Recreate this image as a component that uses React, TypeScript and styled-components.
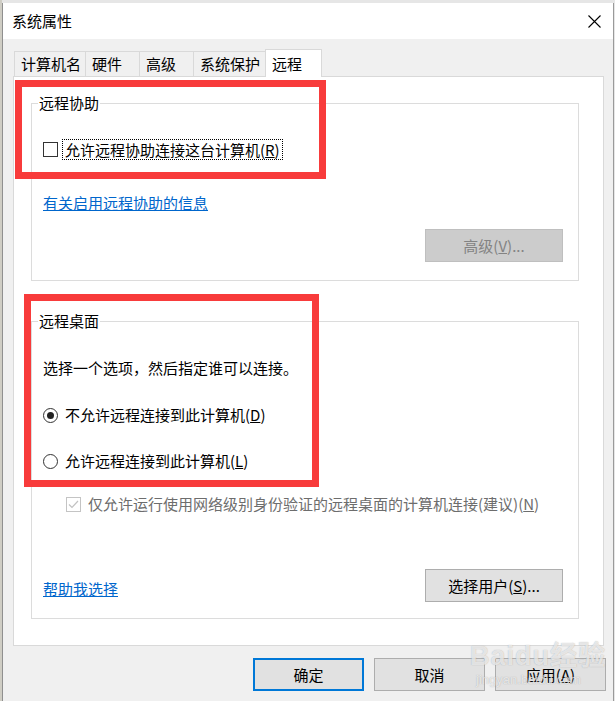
import React from "react";
import styled, { createGlobalStyle } from "styled-components";

const Global = createGlobalStyle`
  html, body { margin: 0; padding: 0; background: #e4e4e4; }
  body {
    font-family: "Noto Sans CJK SC", "Noto Sans", sans-serif;
    font-size: 15px;
    color: #000;
    overflow: hidden;
  }
  * { box-sizing: border-box; }
`;

const Stage = styled.div`
  position: relative;
  width: 615px;
  height: 701px;
  overflow: hidden;
  padding: 3px 1px 0 2px;
  background: linear-gradient(to right, #cfcdc4 0, #cfcdc4 2px, #e6e6e6 2px);
`;

const Window = styled.div`
  display: flex;
  flex-direction: column;
  height: 698px;
  background: #f0f0f0;
  border-left: 1px solid #8f8f8f;
  border-right: 1px solid #9a9a9a;
`;

const TitleBar = styled.div`
  display: flex;
  align-items: center;
  justify-content: space-between;
  height: 36px;
  padding-left: 9px;
  background: #fff;
  line-height: 20px;
`;

const CloseBox = styled.div`
  width: 38px;
  height: 36px;
  display: flex;
  align-items: center;
  justify-content: center;
`;

const Body = styled.div`
  display: flex;
  flex-direction: column;
  padding: 10px 9px 0 10px;
`;

const TabStrip = styled.div`
  display: flex;
  align-items: flex-end;
  height: 28px;
  margin-left: 1px;
  margin-bottom: -1px;
  position: relative;
  z-index: 1;
`;

const Tab = styled.div<{ $w: number; $active?: boolean }>`
  width: ${(p) => p.$w}px;
  height: ${(p) => (p.$active ? 28 : 25)}px;
  margin-bottom: ${(p) => (p.$active ? 0 : 1)}px;
  margin-left: -1px;
  &:first-child { margin-left: 0; }
  display: flex;
  align-items: center;
  padding-left: 6px;
  border: 1px solid #d9d9d9;
  border-bottom: none;
  background: ${(p) => (p.$active ? "#fff" : "#f0f0f0")};
  position: relative;
  z-index: ${(p) => (p.$active ? 2 : 1)};
  line-height: 20px;
  white-space: nowrap;
`;

const Panel = styled.div`
  background: #fff;
  border: 1px solid #d9d9d9;
  padding: 26px 24px 26px 17px;
`;

const GroupBox = styled.div<{ $pt: number; $pb: number; $mt?: number }>`
  position: relative;
  border: 1px solid #dcdcdc;
  padding: ${(p) => p.$pt}px 15px ${(p) => p.$pb}px 11px;
  margin-top: ${(p) => p.$mt ?? 0}px;
`;

const Legend = styled.span`
  position: absolute;
  top: -11px;
  left: 6px;
  padding: 0 1px;
  background: #fff;
  line-height: 20px;
`;

const Row = styled.div<{ $mt?: number; $indent?: number }>`
  display: flex;
  align-items: center;
  height: 22px;
  margin-top: ${(p) => p.$mt ?? 0}px;
  padding-left: ${(p) => p.$indent ?? 0}px;
  line-height: 20px;
  white-space: nowrap;
`;

const BottomRow = styled.div<{ $mt: number }>`
  display: flex;
  align-items: flex-end;
  justify-content: space-between;
  margin-top: ${(p) => p.$mt}px;
`;

const RightRow = styled.div<{ $mt: number }>`
  display: flex;
  justify-content: flex-end;
  margin-top: ${(p) => p.$mt}px;
`;

const CheckBox = styled.span<{ $disabled?: boolean }>`
  flex: none;
  width: 15px;
  height: 15px;
  border: 1px solid ${(p) => (p.$disabled ? "#c4c4c4" : "#333")};
  background: #fff;
  display: flex;
  align-items: center;
  justify-content: center;
`;

const Radio = styled.span<{ $checked?: boolean }>`
  flex: none;
  width: 15px;
  height: 15px;
  border-radius: 50%;
  border: 1px solid #333;
  background: #fff;
  display: flex;
  align-items: center;
  justify-content: center;
  &::after {
    content: "";
    display: ${(p) => (p.$checked ? "block" : "none")};
    width: 7px;
    height: 7px;
    border-radius: 50%;
    background: #222;
  }
`;

const Label = styled.span<{ $disabled?: boolean }>`
  margin-left: 7px;
  color: ${(p) => (p.$disabled ? "#6d6d6d" : "#000")};
`;

const FocusLabel = styled.span`
  margin-left: 4px;
  padding: 0 2px;
  border: 1px dotted #000;
  line-height: 19px;
`;

const Link = styled.a`
  color: #0066cc;
  text-decoration: underline;
  line-height: 22px;
  cursor: pointer;
`;

const LinkBottom = styled(Link)`
  margin-bottom: 2px;
`;

const Button = styled.button<{ $w: number; $variant?: "default" | "disabled" | "normal" }>`
  width: ${(p) => p.$w}px;
  height: 33px;
  padding: 0;
  font-family: inherit;
  font-size: 15px;
  line-height: 20px;
  background: ${(p) => (p.$variant === "disabled" ? "#cccccc" : "#e1e1e1")};
  color: ${(p) => (p.$variant === "disabled" ? "#838383" : "#000")};
  border: ${(p) =>
    p.$variant === "default"
      ? "2px solid #0078d7"
      : p.$variant === "disabled"
      ? "1px solid #bfbfbf"
      : "1px solid #adadad"};
`;

const Footer = styled.div`
  display: flex;
  justify-content: flex-end;
  gap: 10px;
  margin-top: 12px;
  margin-right: -2px;
`;

const Annotation = styled.div<{ $x: number; $y: number; $w: number; $h: number }>`
  position: absolute;
  left: ${(p) => p.$x}px;
  top: ${(p) => p.$y}px;
  width: ${(p) => p.$w}px;
  height: ${(p) => p.$h}px;
  border: 7px solid #f83b3b;
  pointer-events: none;
`;

const Watermark = styled.div`
  position: absolute;
  left: 470px;
  top: 640px;
  display: flex;
  flex-direction: column;
  align-items: flex-start;
  pointer-events: none;
  color: rgba(255, 255, 255, 0.7);
  text-shadow: 0 0 1px rgba(110, 110, 110, 0.55);
  font-family: "Liberation Sans", "Noto Sans CJK SC", sans-serif;
`;

const WmMain = styled.div`
  font-size: 27px;
  font-weight: bold;
  line-height: 32px;
  letter-spacing: 1px;
`;

const WmSub = styled.div`
  font-size: 13px;
  line-height: 16px;
  margin-left: 6px;
`;

export default function App() {
  return (
    <>
      <Global />
      <Stage>
        <Window>
          <TitleBar>
            <span>系统属性</span>
            <CloseBox>
              <svg width="13" height="13" viewBox="0 0 13 13">
                <path d="M0.5 0.5 L12.5 12.5 M12.5 0.5 L0.5 12.5" stroke="#000" strokeWidth="1.1" fill="none" />
              </svg>
            </CloseBox>
          </TitleBar>
          <Body>
            <TabStrip>
              <Tab $w={72}>计算机名</Tab>
              <Tab $w={55}>硬件</Tab>
              <Tab $w={55}>高级</Tab>
              <Tab $w={73}>系统保护</Tab>
              <Tab $w={57} $active>
                远程
              </Tab>
            </TabStrip>
            <Panel>
              <GroupBox $pt={34} $pb={18}>
                <Legend>远程协助</Legend>
                <Row>
                  <CheckBox />
                  <FocusLabel>
                    允许远程协助连接这台计算机(<u>R</u>)
                  </FocusLabel>
                </Row>
                <Row $mt={32}>
                  <Link>有关启用远程协助的信息</Link>
                </Row>
                <RightRow $mt={15}>
                  <Button $w={138} $variant="disabled" disabled>
                    高级(<u>V</u>)...
                  </Button>
                </RightRow>
              </GroupBox>
              <GroupBox $pt={35} $pb={16} $mt={40}>
                <Legend>远程桌面</Legend>
                <Row>选择一个选项，然后指定谁可以连接。</Row>
                <Row $mt={25}>
                  <Radio $checked />
                  <Label>
                    不允许远程连接到此计算机(<u>D</u>)
                  </Label>
                </Row>
                <Row $mt={24}>
                  <Radio />
                  <Label>
                    允许远程连接到此计算机(<u>L</u>)
                  </Label>
                </Row>
                <Row $mt={21} $indent={23}>
                  <CheckBox $disabled>
                    <svg width="11" height="9" viewBox="0 0 11 9">
                      <path d="M1 4.5 L4 7.5 L10 1" stroke="#c2c2c2" strokeWidth="1.2" fill="none" />
                    </svg>
                  </CheckBox>
                  <Label $disabled>
                    仅允许运行使用网络级别身份验证的远程桌面的计算机连接(建议)(<u>N</u>)
                  </Label>
                </Row>
                <BottomRow $mt={54}>
                  <LinkBottom>帮助我选择</LinkBottom>
                  <Button $w={138}>
                    选择用户(<u>S</u>)...
                  </Button>
                </BottomRow>
              </GroupBox>
            </Panel>
            <Footer>
              <Button $w={111} $variant="default">
                确定
              </Button>
              <Button $w={111}>取消</Button>
              <Button $w={111}>
                应用(<u>A</u>)
              </Button>
            </Footer>
          </Body>
        </Window>
        <Annotation $x={15} $y={80} $w={311} $h={99} />
        <Annotation $x={24} $y={294} $w={295} $h={193} />
        <Watermark>
          <WmMain>Baidu经验</WmMain>
          <WmSub>jingyan.baidu.com</WmSub>
        </Watermark>
      </Stage>
    </>
  );
}
